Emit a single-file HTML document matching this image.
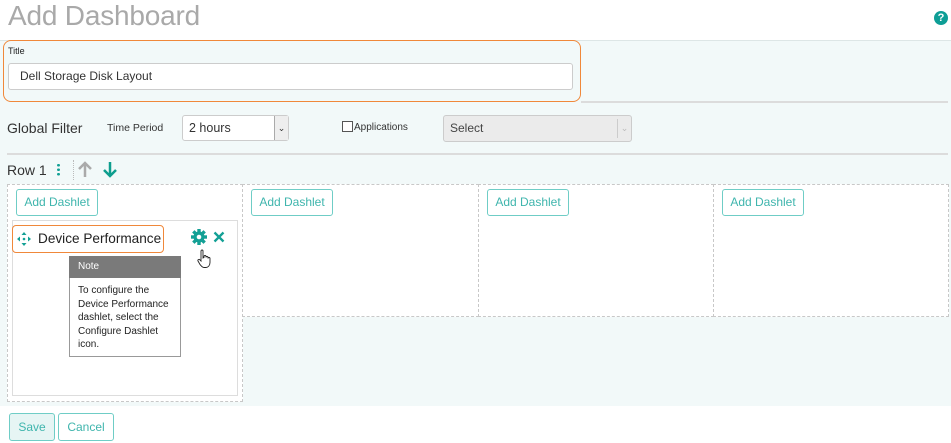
<!DOCTYPE html>
<html><head><style>
*{box-sizing:border-box;margin:0;padding:0}
body{width:951px;height:443px;overflow:hidden;background:#fff;font-family:"Liberation Sans",sans-serif;position:relative;color:#333}
.a{position:absolute}
.btn{position:absolute;border:1px solid #6fcdc6;border-radius:3px;color:#3fb5ad;font-size:12px;background:#fff;text-align:center;line-height:25px;height:27px}
.col{position:absolute;border:1px dashed #c8c8c8;background:#fff}
</style></head><body>
<div class="a" style="left:8px;top:0;font-size:28px;color:#a9a9a9;font-weight:300;letter-spacing:-0.2px">Add Dashboard</div>
<div class="a" style="left:934px;top:11px;width:14px;height:14px;border-radius:50%;background:#0e9e96;color:#fff;font-size:11px;font-weight:bold;text-align:center;line-height:14px">?</div>
<div class="a" style="left:0;top:40px;width:951px;height:366px;background:#f2f9f9;border-top:1px solid #dde6e6"></div>
<div class="a" style="left:581px;top:101px;width:367px;height:2px;background:#dcdcdc"></div>
<div class="a" style="left:3px;top:40px;width:578px;height:62px;border:1.5px solid #f0883a;border-radius:8px"></div>
<div class="a" style="left:8px;top:46px;font-size:9px;color:#222">Title</div>
<div class="a" style="left:8px;top:63px;width:565px;height:27px;background:#fff;border:1px solid #ccc;border-radius:3px;font-size:12px;line-height:25px;padding-left:11px">Dell Storage Disk Layout</div>
<div class="a" style="left:7px;top:120px;font-size:14px">Global Filter</div>
<div class="a" style="left:107px;top:122px;font-size:10.5px">Time Period</div>
<div class="a" style="left:182px;top:115px;width:107px;height:26px;background:#fff;border:1px solid #ccc;border-radius:3px;font-size:12.5px;line-height:24px;padding-left:6px">2 hours<span style="position:absolute;right:0;top:0;width:14px;height:24px;background:#eee;border-left:1px solid #aaa;font-size:9px;text-align:center">&#8964;</span></div>
<div class="a" style="left:342px;top:121px;width:11px;height:11px;border:1px solid #555;background:#fff"></div>
<div class="a" style="left:354px;top:122px;font-size:10px">Applications</div>
<div class="a" style="left:443px;top:115px;width:189px;height:27px;background:#ebebeb;border:1px solid #ccc;border-radius:3px;font-size:12px;line-height:25px;padding-left:6px;color:#444">Select<span style="position:absolute;right:0;top:3px;width:14px;height:19px;border-left:1px solid #ccc;color:#bbb;font-size:9px;text-align:center;line-height:19px">&#8964;</span></div>
<div class="a" style="left:7px;top:153px;width:941px;height:2px;background:#dcdcdc"></div>
<div class="a" style="left:7px;top:162px;font-size:14px">Row 1</div>
<div class="a" style="left:57px;top:163px;width:3px;height:13px;background:radial-gradient(circle,#13a095 1.3px,transparent 1.5px) 0 0/3px 4.5px"></div>
<div class="a" style="left:73px;top:160px;height:20px;border-left:1px dotted #bbb"></div>
<svg class="a" style="left:77px;top:161px" width="16" height="17"><path d="M8 16V2M2 8l6-6 6 6" stroke="#aaa" stroke-width="2.5" fill="none"/></svg>
<svg class="a" style="left:102px;top:161px" width="16" height="17"><path d="M8 1v14M2 9l6 6 6-6" stroke="#0e9e8e" stroke-width="2.5" fill="none"/></svg>
<div class="col" style="left:7px;top:184px;width:236px;height:218px"></div>
<div class="col" style="left:242px;top:184px;width:237px;height:133px"></div>
<div class="col" style="left:478px;top:184px;width:236px;height:133px"></div>
<div class="col" style="left:713px;top:184px;width:236px;height:133px"></div>
<div class="btn" style="left:16px;top:189px;width:82px">Add Dashlet</div>
<div class="btn" style="left:251px;top:189px;width:82px">Add Dashlet</div>
<div class="btn" style="left:487px;top:189px;width:82px">Add Dashlet</div>
<div class="btn" style="left:722px;top:189px;width:82px">Add Dashlet</div>
<div class="a" style="left:12px;top:220px;width:226px;height:176px;border:1px solid #ddd;background:#fff"></div>
<div class="a" style="left:12px;top:225px;width:152px;height:28px;border:1.5px solid #f0883a;border-radius:4px;background:#fff"></div>
<svg class="a" style="left:17px;top:232px" width="14" height="14" fill="#13a095"><path d="M7 0l2.5 3h-5zM7 14l2.5-3h-5zM0 7l3-2.5v5zM14 7l-3-2.5v5z"/><circle cx="7" cy="7" r="1.3"/></svg>
<div class="a" style="left:38px;top:231px;font-size:13.6px;color:#222">Device Performance</div>
<svg class="a" style="left:191px;top:229px" width="16" height="16"><g fill="#13a095"><circle cx="8" cy="8" r="5.5"/><rect x="6.3" y="0" width="3.4" height="16"/><rect x="0" y="6.3" width="16" height="3.4"/><rect x="6.3" y="0" width="3.4" height="16" transform="rotate(45 8 8)"/><rect x="6.3" y="0" width="3.4" height="16" transform="rotate(-45 8 8)"/></g><circle cx="8" cy="8" r="2.3" fill="#fff"/></svg>
<svg class="a" style="left:213px;top:231px" width="12" height="12"><path d="M1.5 1.5l9 9M10.5 1.5l-9 9" stroke="#13a095" stroke-width="2.3"/></svg>
<svg class="a" style="left:196px;top:249px" width="16" height="20"><path d="M5 2a1 1 0 012 0v7l1-.5v-1a1 1 0 012 0v1a1 1 0 012 0v1a1 1 0 012 0v4c0 3-2 5-4 5H8c-2 0-3-2-4-3L2 12a1 1 0 012-1l1 1z" fill="#fff" stroke="#222" stroke-width="0.9"/></svg>
<div class="a" style="left:69px;top:256px;width:112px;height:101px;border:1px solid #999;background:#fff"></div>
<div class="a" style="left:69px;top:256px;width:112px;height:22px;background:#7a7a7a;color:#fff;font-size:10px;line-height:22px;padding-left:9px">Note</div>
<div class="a" style="left:78px;top:284px;width:100px;font-size:10px;line-height:13.6px;color:#222">To configure the Device Performance dashlet, select the Configure Dashlet icon.</div>
<div class="a" style="left:0;top:406px;width:951px;height:37px;background:#fff"></div>
<div class="btn" style="left:9px;top:413px;width:46px;background:#e6f5f4;line-height:26px;height:28px">Save</div>
<div class="btn" style="left:58px;top:413px;width:56px;line-height:26px;height:28px">Cancel</div>
</body></html>
